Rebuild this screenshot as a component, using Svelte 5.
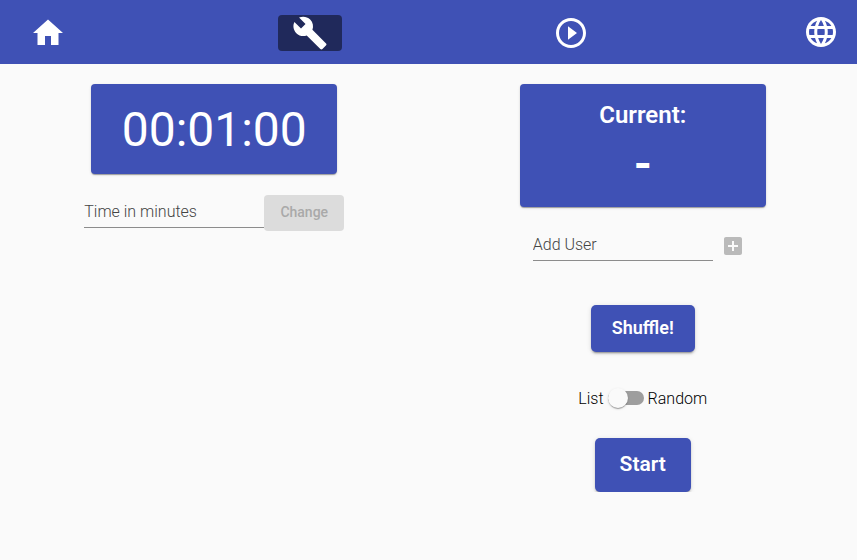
<script>
  let minutes = $state('');
  let user = $state('');
  let random = $state(false);
</script>

<nav class="toolbar" aria-label="Main">
  <a class="nav-link" href="#home" aria-label="Home">
    <svg viewBox="0 0 24 24"><path d="M10 20v-6h4v6h5v-8h3L12 3 2 12h3v8z" /></svg>
  </a>
  <a class="nav-link active" href="#settings" aria-label="Settings" aria-current="page">
    <svg viewBox="0 0 24 24"><path d="M22.7 19l-9.1-9.1c.9-2.3.4-5-1.5-6.9-2-2-5-2.4-7.4-1.3L9 6 6 9 1.6 4.7C.4 7.1.9 10.1 2.9 12.1c1.9 1.9 4.6 2.4 6.9 1.5l9.1 9.1c.4.4 1 .4 1.4 0l2.3-2.3c.5-.4.5-1.1.1-1.4z" /></svg>
  </a>
  <a class="nav-link" href="#play" aria-label="Play">
    <svg viewBox="0 0 24 24"><path d="M10 16.500l6-4.500-6-4.500v9zM12 2C6.480 2 2 6.480 2 12s4.480 10 10 10 10-4.480 10-10S17.520 2 12 2zm0 18c-4.410 0-8-3.590-8-8s3.590-8 8-8 8 3.590 8 8-3.590 8-8 8z" /></svg>
  </a>
  <button class="language" type="button" aria-label="Language">
    <svg viewBox="0 0 24 24"><path d="M11.990 2C6.470 2 2 6.480 2 12s4.470 10 9.990 10C17.520 22 22 17.520 22 12S17.520 2 11.990 2zm6.930 6h-2.950c-.32-1.250-.78-2.450-1.380-3.560 1.840.63 3.370 1.910 4.330 3.560zM12 4.040c.83 1.200 1.480 2.530 1.910 3.960h-3.820c.43-1.430 1.080-2.760 1.910-3.960zM4.260 14C4.100 13.360 4 12.690 4 12s.1-1.360.26-2h3.380c-.08.66-.14 1.320-.14 2s.06 1.340.14 2H4.260zm.82 2h2.950c.32 1.250.78 2.450 1.380 3.560-1.840-.63-3.370-1.900-4.330-3.560zm2.950-8H5.080c.96-1.660 2.490-2.930 4.330-3.560C8.810 5.550 8.350 6.750 8.030 8zM12 19.960c-.83-1.200-1.480-2.530-1.910-3.960h3.820c-.43 1.430-1.080 2.760-1.910 3.960zM14.340 14H9.660c-.09-.66-.16-1.320-.16-2s.07-1.350.16-2h4.680c.09.65.16 1.320.16 2s-.07 1.340-.16 2zm.25 5.560c.6-1.110 1.060-2.310 1.380-3.560h2.950c-.96 1.650-2.490 2.930-4.330 3.560zM16.360 14c.08-.66.14-1.320.14-2s-.06-1.340-.14-2h3.380c.16.64.26 1.310.26 2s-.1 1.360-.26 2h-3.380z" /></svg>
  </button>
</nav>

<main>
  <section class="column">
    <div class="card timer">00:01:00</div>
    <form class="time-form">
      <input class="field" type="text" placeholder="Time in minutes" aria-label="Time in minutes" bind:value={minutes} />
      <button class="change" type="button" disabled={!minutes}>Change</button>
    </form>
  </section>

  <section class="column">
    <div class="card current">
      <h2>Current:</h2>
      <p>-</p>
    </div>
    <form class="user-form">
      <input class="field" type="text" placeholder="Add User" aria-label="Add User" bind:value={user} />
      <button class="add" type="button" aria-label="Add" disabled={!user}>
        <svg viewBox="0 0 24 24"><path d="M19 3H5c-1.110 0-2 .9-2 2v14c0 1.100.89 2 2 2h14c1.100 0 2-.9 2-2V5c0-1.100-.9-2-2-2zm-2 10h-4v4h-2v-4H7v-2h4V7h2v4h4v2z" /></svg>
      </button>
    </form>
    <button class="raised shuffle" type="button">Shuffle!</button>
    <label class="mode">
      List
      <input type="checkbox" role="switch" bind:checked={random} />
      Random
    </label>
    <button class="raised start" type="button">Start</button>
  </section>
</main>

<style>
  :global(body) {
    margin: 0;
    background: #fafafa;
    color: rgba(0, 0, 0, 0.87);
    font-family: Roboto, "Liberation Sans", sans-serif;
    font-size: 16px;
  }

  button,
  input {
    box-sizing: border-box;
    margin: 0;
    padding: 0;
    border: 0;
    font-family: inherit;
  }

  svg {
    display: block;
    fill: currentColor;
  }

  .toolbar {
    display: flex;
    align-items: center;
    justify-content: space-between;
    height: 64px;
    padding: 0 16px;
    background: #3f51b5;
  }

  .toolbar svg {
    width: 36px;
    height: 36px;
  }

  .nav-link,
  .language {
    display: flex;
    align-items: center;
    justify-content: center;
    width: 64px;
    height: 36px;
    border-radius: 4px;
    background: none;
    color: #fff;
  }

  .nav-link {
    margin-top: 2px;
  }

  .nav-link.active {
    background: #20295b;
  }

  .language {
    width: 40px;
  }

  main {
    display: grid;
    grid-template-columns: 1fr 1fr;
    padding-top: 20px;
  }

  .column {
    display: flex;
    flex-direction: column;
    align-items: center;
  }

  .card {
    box-sizing: border-box;
    width: 246px;
    border-radius: 4px;
    background: #3f51b5;
    color: #fff;
    text-align: center;
    box-shadow: 0 2px 1px -1px rgba(0, 0, 0, 0.2), 0 1px 1px rgba(0, 0, 0, 0.14), 0 1px 3px rgba(0, 0, 0, 0.12);
  }

  .timer {
    height: 90px;
    font-size: 48px;
    line-height: 92px;
  }

  .current {
    height: 123px;
    padding-top: 16px;
  }

  .current h2 {
    margin: 0;
    font-size: 24px;
    font-weight: 600;
    line-height: 30px;
  }

  .current p {
    margin: 0;
    font-size: 48px;
    font-weight: 600;
    line-height: 68px;
  }

  .field {
    width: 180px;
    height: 33px;
    border-bottom: 1px solid #8c8c8c;
    background: transparent;
    color: inherit;
    font-size: 16px;
    font-weight: 300;
    outline: none;
  }

  .field::placeholder {
    color: #444;
    opacity: 1;
  }

  .time-form {
    display: flex;
    margin-top: 21px;
  }

  .change {
    width: 80px;
    height: 36px;
    padding-bottom: 2px;
    border-radius: 4px;
    background: #dcdcdc;
    color: #a9a9a9;
    font-size: 14px;
    font-weight: 500;
  }

  .user-form {
    display: flex;
    align-items: flex-end;
    gap: 8px;
    margin-top: 21px;
    padding-right: 8px;
  }

  .add {
    width: 24px;
    height: 24px;
    margin-bottom: 3px;
    background: none;
    color: #bababa;
  }

  .raised {
    padding-bottom: 2px;
    border-radius: 5px;
    background: #3f51b5;
    color: #fff;
    font-weight: 600;
    box-shadow: 0 3px 1px -2px rgba(0, 0, 0, 0.2), 0 2px 2px rgba(0, 0, 0, 0.14), 0 1px 5px rgba(0, 0, 0, 0.12);
  }

  .shuffle {
    width: 104px;
    height: 47px;
    margin-top: 44px;
    font-size: 18px;
  }

  .mode {
    display: flex;
    align-items: center;
    gap: 4px;
    margin-top: 37px;
    color: #000;
    font-weight: 300;
    line-height: 20px;
  }

  .mode input {
    display: flex;
    align-items: center;
    width: 36px;
    height: 14px;
    margin-bottom: 2px;
    border-radius: 8px;
    background: #9e9e9e;
    appearance: none;
  }

  .mode input::before {
    content: "";
    width: 20px;
    height: 20px;
    flex: none;
    border-radius: 50%;
    background: #fafafa;
    box-shadow: 0 2px 1px -1px rgba(0, 0, 0, 0.2), 0 1px 1px rgba(0, 0, 0, 0.14), 0 1px 3px rgba(0, 0, 0, 0.12);
  }

  .mode input:checked {
    justify-content: flex-end;
  }

  .start {
    width: 96px;
    height: 54px;
    margin-top: 29px;
    font-size: 21px;
  }
</style>
